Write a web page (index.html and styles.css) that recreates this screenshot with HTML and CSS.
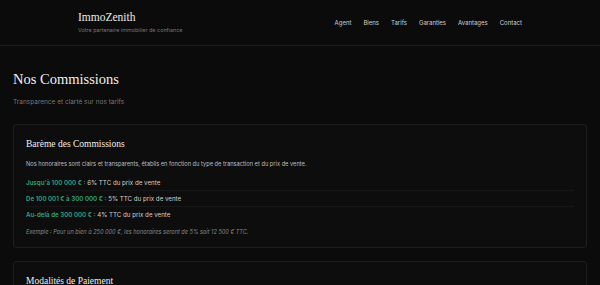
FILE: index.html
```html
<!DOCTYPE html>
<html lang="fr">
<head>
<meta charset="utf-8">
<title>ImmoZenith - Nos Commissions</title>
<link rel="stylesheet" href="styles.css">
</head>
<body>
<header class="site-header">
  <div class="header-inner">
    <div class="brand">
      <div class="brand-name">ImmoZenith</div>
      <div class="brand-tagline">Votre partenaire immobilier de confiance</div>
    </div>
    <nav class="nav">
      <a href="#">Agent</a>
      <a href="#">Biens</a>
      <a href="#">Tarifs</a>
      <a href="#">Garanties</a>
      <a href="#">Avantages</a>
      <a href="#">Contact</a>
    </nav>
  </div>
</header>
<main class="main">
  <h1 class="page-title">Nos Commissions</h1>
  <p class="page-subtitle">Transparence et clarté sur nos tarifs</p>
  <section class="card">
    <h2 class="card-title">Barème des Commissions</h2>
    <p class="card-text">Nos honoraires sont clairs et transparents, établis en fonction du type de transaction et du prix de vente.</p>
    <ul class="rates">
      <li><span class="hl">Jusqu'à 100 000 € :</span> 6% TTC du prix de vente</li>
      <li><span class="hl">De 100 001 € à 300 000 € :</span> 5% TTC du prix de vente</li>
      <li><span class="hl">Au-delà de 300 000 € :</span> 4% TTC du prix de vente</li>
    </ul>
    <p class="example">Exemple : Pour un bien à 250 000 €, les honoraires seront de 5% soit 12 500 € TTC.</p>
  </section>
  <section class="card">
    <h2 class="card-title">Modalités de Paiement</h2>
    <p class="card-text">Les honoraires sont dus à la signature de l'acte authentique de vente chez le notaire.</p>
  </section>
</main>
</body>
</html>
```
FILE: styles.css
```css
* { box-sizing: border-box; }
html, body { margin: 0; padding: 0; }
body {
  background: #0b0b0b;
  color: #d0d0d0;
  font-family: Inter, "Noto Sans", sans-serif;
}
.site-header {
  border-bottom: 1px solid #1c1c1c;
}
.header-inner {
  width: 444px;
  margin: 0 auto;
  height: 45px;
  display: flex;
  align-items: center;
  justify-content: space-between;
}
.brand { display: flex; flex-direction: column; gap: 5px; }
.brand-name {
  font-family: "Liberation Serif", serif;
  font-size: 11.5px;
  color: #ececec;
  line-height: 1;
}
.brand-tagline {
  font-size: 5.45px;
  color: #777;
  line-height: 1;
}
.nav { display: flex; gap: 12px; }
.nav a {
  color: #cfcfcf;
  text-decoration: none;
  font-size: 6px;
}
.main { padding: 22px 13px 0; }
.page-title {
  margin: 0;
  font-family: "Liberation Serif", serif;
  font-weight: normal;
  font-size: 14.5px;
  color: #f0f0f0;
  line-height: 22px;
}
.page-subtitle {
  margin: 8px 0 18px;
  font-size: 6.5px;
  color: #777;
}
.card {
  background: #0d0d0d;
  border: 1px solid #1e1e1e;
  border-radius: 3px;
  padding: 13px 12px 10px;
  margin-bottom: 13px;
}
.card-title {
  margin: 0 0 9px;
  font-family: "Liberation Serif", serif;
  font-weight: normal;
  font-size: 9.5px;
  color: #f0f0f0;
  line-height: 12px;
}
.card-text {
  margin: 0 0 6px;
  font-size: 5.7px;
  color: #bdbdbd;
  line-height: 10px;
}
.rates { list-style: none; margin: 0; padding: 0; }
.rates li {
  font-size: 6.2px;
  line-height: 10px;
  padding: 3px 0 2px;
  color: #cfcfcf;
  border-bottom: 1px solid #161616;
}
.rates li:last-child { border-bottom: none; }
.hl { color: #2fa37f; font-weight: 600; }
.example {
  margin: 5px 0 0;
  font-size: 5.6px;
  font-style: italic;
  color: #888;
  line-height: 10px;
}
```
